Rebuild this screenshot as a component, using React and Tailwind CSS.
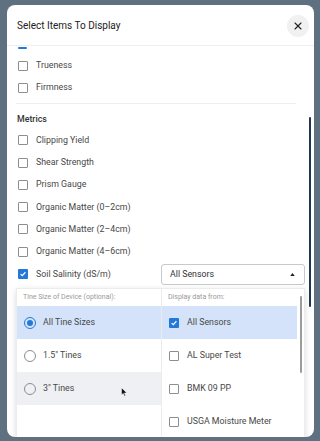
import { X } from "lucide-react";

const topItems = ["Trueness", "Firmness"];
const metricItems = [
  "Clipping Yield",
  "Shear Strength",
  "Prism Gauge",
  "Organic Matter (0–2cm)",
  "Organic Matter (2–4cm)",
  "Organic Matter (4–6cm)",
];

const tineSizes = [
  { label: "All Tine Sizes", selected: true },
  { label: "1.5\" Tines" },
  { label: "3\" Tines", hover: true },
];

const sensors = [
  { label: "All Sensors", checked: true },
  { label: "AL Super Test" },
  { label: "BMK 09 PP" },
  { label: "USGA Moisture Meter" },
];

function Checkbox({ checked }) {
  if (checked) {
    return (
      <span className="flex h-[10px] w-[10px] shrink-0 items-center justify-center rounded-[1px] bg-[#2479d8]">
        <svg viewBox="0 0 10 10" className="h-[8px] w-[8px]">
          <path d="M2 5.2 L4.1 7.2 L8 2.8" fill="none" stroke="white" strokeWidth="1.5" />
        </svg>
      </span>
    );
  }
  return <span className="h-[10px] w-[10px] shrink-0 rounded-[1px] border border-[#8d8d8d] bg-white" />;
}

function Radio({ selected }) {
  if (selected) {
    return (
      <span className="flex h-[12px] w-[12px] shrink-0 items-center justify-center rounded-full border border-[#2479d8]">
        <span className="h-[6px] w-[6px] rounded-full bg-[#2479d8]" />
      </span>
    );
  }
  return <span className="h-[12px] w-[12px] shrink-0 rounded-full border border-[#8d8d8d]" />;
}

function Row({ label, checked }) {
  return (
    <div className="flex h-[22.3px] items-center gap-[8px] pl-[11px]">
      <Checkbox checked={checked} />
      <span className="text-[8.8px] text-[#474747]">{label}</span>
    </div>
  );
}

export default function App() {
  return (
    <div className="h-[441px] w-[320px] bg-[#5f7180] pt-[5px] pl-[7px] font-['Roboto',sans-serif]">
      <div className="relative h-[432px] w-[307px] overflow-hidden rounded-[8px] bg-white">
        {/* Header */}
        <div className="flex h-[41px] items-center justify-between border-b border-[#eeeeee] pl-[10px] pr-[5px] pt-[1px]">
          <h1 className="text-[10px] text-[#222]">Select Items To Display</h1>
          <button className="flex h-[22px] w-[22px] items-center justify-center rounded-full bg-[#f1f1f1]">
            <X className="h-[12px] w-[12px] text-[#222]" strokeWidth={2.2} />
          </button>
        </div>

        {/* Scroll body */}
        <div className="relative pr-[9px]">
          <div className="ml-[11px] mt-[1px] h-[2px] w-[9px] rounded-full bg-[#2479d8]" />
          <div className="mt-[5.5px]">
            {topItems.map((item) => (
              <Row key={item} label={item} />
            ))}
          </div>
          <div className="mx-[9px] mt-[4px] h-px bg-[#efefef]" />
          <div className="mt-[5px] flex h-[20px] items-center pl-[10px] text-[8.8px] font-medium text-[#333]">
            Metrics
          </div>
          {metricItems.map((item) => (
            <Row key={item} label={item} />
          ))}
          <div className="flex h-[23px] items-center justify-between">
            <Row label="Soil Salinity (dS/m)" checked />
            <div className="flex h-[21px] w-[144px] items-center justify-between rounded-[3px] border border-[#c9c9c9] pl-[8px] pr-[9px]">
              <span className="text-[8.8px] text-[#333]">All Sensors</span>
              <svg viewBox="0 0 6 4" className="h-[3px] w-[5px]">
                <path d="M0 4 L3 0 L6 4 Z" fill="#222" />
              </svg>
            </div>
          </div>

          {/* modal scrollbar */}
          <div className="absolute right-[3px] top-[70px] h-[190px] w-[2px] rounded-full bg-[#1f3554]" />
        </div>

        {/* Dropdown popup */}
        <div className="absolute left-[9px] top-[283px] flex h-[160px] w-[289px] border border-[#ececec] bg-white shadow-[0_2px_6px_rgba(0,0,0,0.15)]">
          <div className="w-[144px]">
            <div className="flex h-[17px] items-center pl-[6px] text-[7px] text-[#9a9a9a]">
              Tine Size of Device (optional):
            </div>
            {tineSizes.map((t) => (
              <div
                key={t.label}
                className={`flex h-[33px] items-center gap-[7px] pl-[7px] ${
                  t.selected ? "bg-[#d4e3fa]" : t.hover ? "bg-[#eef0f3]" : ""
                }`}
              >
                <Radio selected={t.selected} />
                <span className="text-[8.8px] text-[#474747]">{t.label}</span>
              </div>
            ))}
          </div>
          <div className="relative flex-1 border-l border-[#ececec] pr-[7px]">
            <div className="flex h-[17px] items-center pl-[6px] text-[7px] text-[#9a9a9a]">
              Display data from:
            </div>
            {sensors.map((s) => (
              <div
                key={s.label}
                className={`flex h-[33px] items-center gap-[8px] pl-[7px] ${s.checked ? "bg-[#d4e3fa]" : ""}`}
              >
                <Checkbox checked={s.checked} />
                <span className="text-[8.8px] text-[#474747]">{s.label}</span>
              </div>
            ))}
            <div className="absolute right-[2px] top-[7px] h-[77px] w-[2px] rounded-full bg-[#9c9c9c]" />
          </div>
        </div>

        {/* mouse cursor */}
        <svg viewBox="0 0 8 11" className="absolute left-[114px] top-[382px] h-[10px] w-[7px]">
          <path d="M0.5 0.5 L0.5 9 L2.6 7.2 L4 10.3 L5.3 9.7 L4 6.7 L6.8 6.7 Z" fill="#111" stroke="white" strokeWidth="0.7" />
        </svg>
      </div>
    </div>
  );
}
